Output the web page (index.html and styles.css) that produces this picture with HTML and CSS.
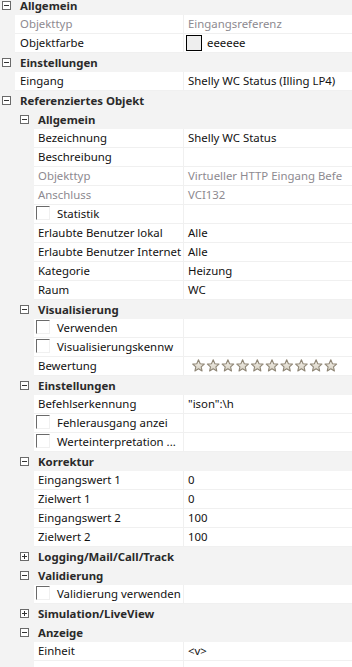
FILE: index.html
```html
<!DOCTYPE html>
<html>
<head>
  <meta charset="UTF-8">
  <title>Eigenschaften</title>
  <link rel="stylesheet" href="styles.css">
</head>
<body>

  <div class="grid">

    <div class="cat l0">
      <svg class="exp" width="9" height="9" viewBox="0 0 9 9"><rect x="0.5" y="0.5" width="8" height="8" fill="#fff" stroke="#6a6a6a"/><path d="M2 4.5h5" stroke="#333"/></svg>
      <span>Allgemein</span>
    </div>
    <div class="prop l1">
      <div class="name dis">Objekttyp</div>
      <div class="value dis">Eingangsreferenz</div>
    </div>
    <div class="prop l1">
      <div class="name">Objektfarbe</div>
      <div class="value"><span class="swatch"></span>eeeeee</div>
    </div>

    <div class="cat l0">
      <svg class="exp" width="9" height="9" viewBox="0 0 9 9"><rect x="0.5" y="0.5" width="8" height="8" fill="#fff" stroke="#6a6a6a"/><path d="M2 4.5h5" stroke="#333"/></svg>
      <span>Einstellungen</span>
    </div>
    <div class="prop l1">
      <div class="name">Eingang</div>
      <div class="value">Shelly WC Status (Illing LP4)</div>
    </div>

    <div class="cat l0">
      <svg class="exp" width="9" height="9" viewBox="0 0 9 9"><rect x="0.5" y="0.5" width="8" height="8" fill="#fff" stroke="#6a6a6a"/><path d="M2 4.5h5" stroke="#333"/></svg>
      <span>Referenziertes Objekt</span>
    </div>

    <!-- Referenziertes Objekt / Allgemein -->
    <div class="cat l1">
      <svg class="exp" width="9" height="9" viewBox="0 0 9 9"><rect x="0.5" y="0.5" width="8" height="8" fill="#fff" stroke="#6a6a6a"/><path d="M2 4.5h5" stroke="#333"/></svg>
      <span>Allgemein</span>
    </div>
    <div class="prop l2">
      <div class="name">Bezeichnung</div>
      <div class="value">Shelly WC Status</div>
    </div>
    <div class="prop l2">
      <div class="name">Beschreibung</div>
      <div class="value"></div>
    </div>
    <div class="prop l2">
      <div class="name dis">Objekttyp</div>
      <div class="value dis">Virtueller HTTP Eingang Befe</div>
    </div>
    <div class="prop l2">
      <div class="name dis">Anschluss</div>
      <div class="value dis">VCI132</div>
    </div>
    <div class="prop l2">
      <div class="name check"><span class="cb"></span>Statistik</div>
      <div class="value"></div>
    </div>
    <div class="prop l2">
      <div class="name">Erlaubte Benutzer lokal</div>
      <div class="value">Alle</div>
    </div>
    <div class="prop l2">
      <div class="name">Erlaubte Benutzer Internet</div>
      <div class="value">Alle</div>
    </div>
    <div class="prop l2">
      <div class="name">Kategorie</div>
      <div class="value">Heizung</div>
    </div>
    <div class="prop l2">
      <div class="name">Raum</div>
      <div class="value">WC</div>
    </div>

    <!-- Visualisierung -->
    <div class="cat l1">
      <svg class="exp" width="9" height="9" viewBox="0 0 9 9"><rect x="0.5" y="0.5" width="8" height="8" fill="#fff" stroke="#6a6a6a"/><path d="M2 4.5h5" stroke="#333"/></svg>
      <span>Visualisierung</span>
    </div>
    <div class="prop l2">
      <div class="name check"><span class="cb"></span>Verwenden</div>
      <div class="value"></div>
    </div>
    <div class="prop l2">
      <div class="name check"><span class="cb"></span>Visualisierungskennw</div>
      <div class="value"></div>
    </div>
    <div class="prop l2">
      <div class="name">Bewertung</div>
      <div class="value">
        <svg class="stars" width="150" height="14" viewBox="0 0 150 14">
          <defs>
            <linearGradient id="sg" x1="0" y1="0" x2="0" y2="1">
              <stop offset="0" stop-color="#f4f1ea"/>
              <stop offset="1" stop-color="#d6d0c2"/>
            </linearGradient>
            <path id="star" d="M6.5 0.8l1.7 3.9 4.1 0.4-3.1 2.8 0.9 4.1-3.6-2.2-3.6 2.2 0.9-4.1-3.1-2.8 4.1-0.4z" fill="url(#sg)" stroke="#8f8676" stroke-width="1.1" stroke-linejoin="round"/>
          </defs>
          <use href="#star" x="0"/>
          <use href="#star" x="14.7"/>
          <use href="#star" x="29.4"/>
          <use href="#star" x="44.1"/>
          <use href="#star" x="58.8"/>
          <use href="#star" x="73.5"/>
          <use href="#star" x="88.2"/>
          <use href="#star" x="102.9"/>
          <use href="#star" x="117.6"/>
          <use href="#star" x="132.3"/>
        </svg>
      </div>
    </div>

    <!-- Einstellungen -->
    <div class="cat l1">
      <svg class="exp" width="9" height="9" viewBox="0 0 9 9"><rect x="0.5" y="0.5" width="8" height="8" fill="#fff" stroke="#6a6a6a"/><path d="M2 4.5h5" stroke="#333"/></svg>
      <span>Einstellungen</span>
    </div>
    <div class="prop l2">
      <div class="name">Befehlserkennung</div>
      <div class="value">"ison":\h</div>
    </div>
    <div class="prop l2">
      <div class="name check"><span class="cb"></span>Fehlerausgang anzei</div>
      <div class="value"></div>
    </div>
    <div class="prop l2">
      <div class="name check"><span class="cb"></span>Werteinterpretation ...</div>
      <div class="value"></div>
    </div>

    <!-- Korrektur -->
    <div class="cat l1">
      <svg class="exp" width="9" height="9" viewBox="0 0 9 9"><rect x="0.5" y="0.5" width="8" height="8" fill="#fff" stroke="#6a6a6a"/><path d="M2 4.5h5" stroke="#333"/></svg>
      <span>Korrektur</span>
    </div>
    <div class="prop l2">
      <div class="name">Eingangswert 1</div>
      <div class="value">0</div>
    </div>
    <div class="prop l2">
      <div class="name">Zielwert 1</div>
      <div class="value">0</div>
    </div>
    <div class="prop l2">
      <div class="name">Eingangswert 2</div>
      <div class="value">100</div>
    </div>
    <div class="prop l2">
      <div class="name">Zielwert 2</div>
      <div class="value">100</div>
    </div>

    <div class="cat l1">
      <svg class="exp" width="9" height="9" viewBox="0 0 9 9"><rect x="0.5" y="0.5" width="8" height="8" fill="#fff" stroke="#6a6a6a"/><path d="M2 4.5h5M4.5 2v5" stroke="#333"/></svg>
      <span>Logging/Mail/Call/Track</span>
    </div>

    <div class="cat l1">
      <svg class="exp" width="9" height="9" viewBox="0 0 9 9"><rect x="0.5" y="0.5" width="8" height="8" fill="#fff" stroke="#6a6a6a"/><path d="M2 4.5h5" stroke="#333"/></svg>
      <span>Validierung</span>
    </div>
    <div class="prop l2">
      <div class="name check"><span class="cb"></span>Validierung verwenden</div>
      <div class="value"></div>
    </div>

    <div class="cat l1">
      <svg class="exp" width="9" height="9" viewBox="0 0 9 9"><rect x="0.5" y="0.5" width="8" height="8" fill="#fff" stroke="#6a6a6a"/><path d="M2 4.5h5M4.5 2v5" stroke="#333"/></svg>
      <span>Simulation/LiveView</span>
    </div>

    <div class="cat l1">
      <svg class="exp" width="9" height="9" viewBox="0 0 9 9"><rect x="0.5" y="0.5" width="8" height="8" fill="#fff" stroke="#6a6a6a"/><path d="M2 4.5h5" stroke="#333"/></svg>
      <span>Anzeige</span>
    </div>
    <div class="prop l2">
      <div class="name">Einheit</div>
      <div class="value">&lt;v&gt;</div>
    </div>
    <div class="prop l2">
      <div class="name"></div>
      <div class="value"></div>
    </div>

  </div>

</body>
</html>
```

FILE: styles.css
```css
body {
  margin: 0;
  padding: 0;
  background-color: #f3f3f3;
  font-family: "Noto Sans", "Open Sans", sans-serif;
  font-size: 11.4px;
  color: #111111;
  overflow: hidden;
}

.grid {
  margin-top: -4px;
  width: 352px;
}

.cat,
.prop {
  display: flex;
  height: 19px;
  line-height: 18px;
  white-space: nowrap;
  overflow: hidden;
}

.cat {
  align-items: center;
  font-weight: bold;
  color: #2a2a2a;
}

.cat .exp {
  flex: none;
  margin-right: 9px;
}

.cat.l0 {
  padding-left: 2px;
}

.cat.l1 {
  padding-left: 20px;
}

.prop.l1 {
  padding-left: 15px;
}

.prop.l2 {
  padding-left: 34px;
}

.prop .name {
  box-sizing: border-box;
  flex: none;
  height: 19px;
  background: #ffffff;
  border-bottom: 1px solid #f0f0f0;
  overflow: hidden;
}

.prop.l1 .name {
  width: 168px;
  padding-left: 5px;
}

.prop.l2 .name {
  width: 149px;
  padding-left: 4px;
}

.prop .name.check {
  display: flex;
  align-items: center;
  padding-left: 2px;
}

.prop .value {
  box-sizing: border-box;
  flex: 1;
  height: 19px;
  min-width: 0;
  background: #ffffff;
  border-left: 1px solid #f0f0f0;
  border-bottom: 1px solid #f0f0f0;
  padding-left: 4px;
  display: flex;
  align-items: center;
  overflow: hidden;
}

.dis {
  color: #8d8a90;
}

.cb {
  flex: none;
  box-sizing: border-box;
  width: 14px;
  height: 14px;
  margin-right: 7px;
  margin-top: -2px;
  border-top: 1px solid #6a6a6a;
  border-left: 1px solid #6a6a6a;
  border-right: 1px solid #f0f0f0;
  border-bottom: 1px solid #f0f0f0;
  background: #ffffff;
}

.swatch {
  flex: none;
  box-sizing: border-box;
  width: 16px;
  height: 16px;
  margin-left: -2px;
  margin-right: 5px;
  border: 1px solid #000000;
  background: #eeeeee;
}

.stars {
  margin-left: 4px;
  flex: none;
}
```
